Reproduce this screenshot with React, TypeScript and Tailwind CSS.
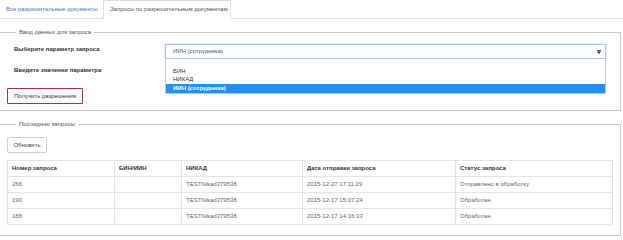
const rows = [
  { id: '266', bin: '', nikad: 'TESTNikad379538', date: '2015-12-27 17:11:29', status: 'Отправлено в обработку' },
  { id: '190', bin: '', nikad: 'TESTNikad379538', date: '2015-12-17 15:07:24', status: 'Обработан' },
  { id: '188', bin: '', nikad: 'TESTNikad379538', date: '2015-12-17 14:16:33', status: 'Обработан' },
]

const options = ['БИН', 'НИКАД', 'ИИН (сотрудника)']

export default function App() {
  return (
    <div className="h-[240px] w-[623px] overflow-hidden bg-white font-['Liberation_Sans',Arial,sans-serif] text-[6px] text-[#333]">
      {/* tabs */}
      <div className="flex h-[19px] items-end border-b border-[#dddddd]">
        <div className="flex h-[18px] w-[101px] items-center pl-[6px] text-[#3a7bbf]">Все разрешительные документы</div>
        <div className="-mb-px ml-[2px] flex h-[19px] w-[128px] items-center border border-b-white border-[#dddddd] bg-white pl-[6px] text-[#555]">
          Запросы по разрешительным документам
        </div>
      </div>

      {/* request form */}
      <fieldset className="-ml-px mt-[9px] w-[622px] border border-[#c9c9c9] px-[7px] pb-[6px] pt-[8px]">
        <legend className="ml-[9px] px-[3px] leading-[8px] text-[#555]">Ввод данных для запроса</legend>
        <div className="relative">
          <div className="grid grid-cols-[158px_441px]">
            <div className="pl-[7px] pt-[2px] font-bold leading-[7px]">Выберите параметр запроса</div>
            <div className="flex h-[15px] items-center justify-between border border-[#9fc8ec] pl-[7px] pr-[4px] text-[#555] shadow-[0_0_2px_rgba(102,175,233,0.5)]">
              <span>ИИН (сотрудника)</span>
              <svg width="4" height="4" viewBox="0 0 4 4">
                <rect x="0" y="0" width="4" height="0.8" fill="#222" />
                <path d="M0 1.4 L4 1.4 L2 4 Z" fill="#222" />
              </svg>
            </div>
          </div>
          <div className="mt-[7px] pl-[7px] pt-[1px] font-bold leading-[7px]">Введите значение параметра</div>

          {/* open select list */}
          <div className="absolute left-[158px] top-[15px] w-[441px] border border-t-0 border-[#b8cde0] bg-white pt-[9px]">
            {options.map((o, i) => (
              <div
                key={o}
                className={
                  i === options.length - 1
                    ? 'h-[9px] bg-[#1e90ff] pl-[7px] font-bold leading-[9px] text-white'
                    : 'h-[8px] pl-[7px] leading-[7px] text-[#333]'
                }
              >
                {o}
              </div>
            ))}
          </div>
        </div>
        <button
          type="button"
          className="mt-[14px] flex h-[16px] w-[76px] items-center justify-center rounded-[1px] border border-[#a83232] bg-white text-[#333]"
        >
          Получить разрешения
        </button>
      </fieldset>

      {/* recent requests */}
      <fieldset className="-ml-px mt-[9px] w-[622px] border border-[#c9c9c9] px-[7px] pb-[10px] pt-[9px]">
        <legend className="ml-[9px] px-[3px] leading-[8px] text-[#555]">Последние запросы</legend>
        <button
          type="button"
          className="flex h-[16px] w-[40px] items-center justify-center rounded-[2px] border border-[#d0d0d0] bg-white text-[#444]"
        >
          Обновить
        </button>
        <table className="mt-[7px] w-[605px] table-fixed border-collapse">
          <colgroup>
            <col className="w-[107px]" />
            <col className="w-[67px]" />
            <col className="w-[121px]" />
            <col className="w-[153px]" />
            <col className="w-[157px]" />
          </colgroup>
          <thead>
            <tr>
              {['Номер запроса', 'БИН/ИИН', 'НИКАД', 'Дата отправки запроса', 'Статус запроса'].map((h) => (
                <th key={h} className="h-[16px] border border-[#e3e3e3] pl-[4px] text-left font-bold text-[#333]">
                  {h}
                </th>
              ))}
            </tr>
          </thead>
          <tbody>
            {rows.map((r) => (
              <tr key={r.id}>
                <td className="h-[16px] border border-[#e3e3e3] pl-[4px] text-[#666]">{r.id}</td>
                <td className="h-[16px] border border-[#e3e3e3] pl-[4px] text-[#666]">{r.bin}</td>
                <td className="h-[16px] border border-[#e3e3e3] pl-[4px] text-[#666]">{r.nikad}</td>
                <td className="h-[16px] border border-[#e3e3e3] pl-[4px] text-[#666]">{r.date}</td>
                <td className="h-[16px] border border-[#e3e3e3] pl-[4px] text-[#666]">{r.status}</td>
              </tr>
            ))}
          </tbody>
        </table>
      </fieldset>
    </div>
  )
}
